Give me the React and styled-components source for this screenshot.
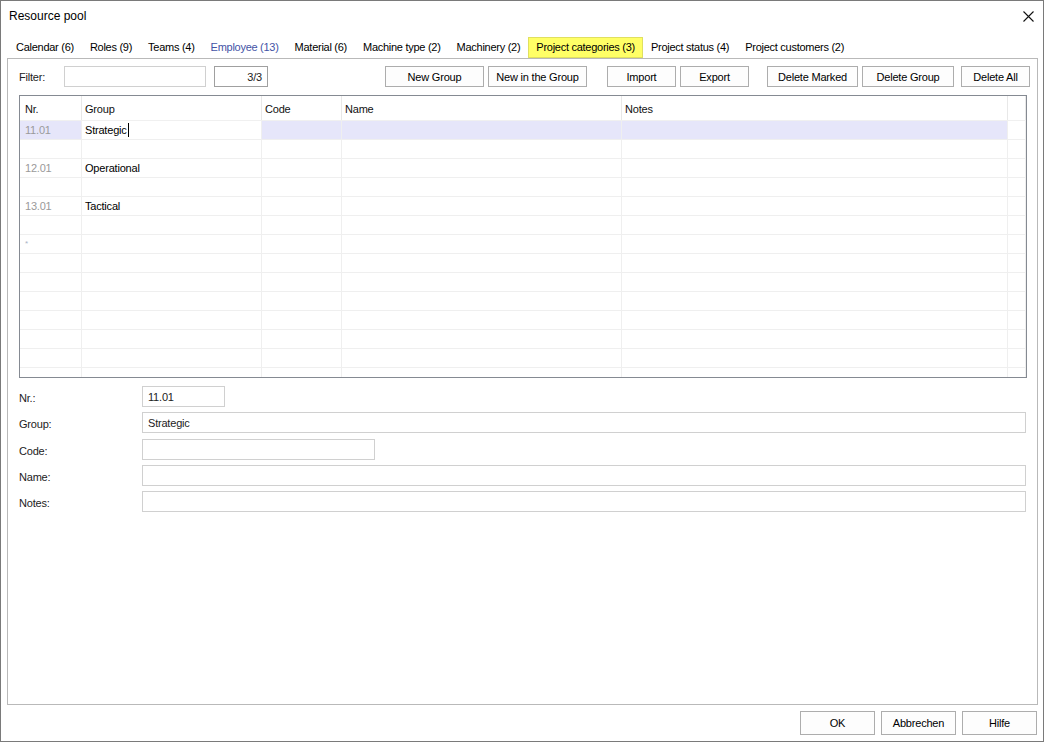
import React from "react";
import styled, { createGlobalStyle } from "styled-components";

const Global = createGlobalStyle`
  html, body { margin: 0; padding: 0; background: #fff; }
  body { font-family: "Liberation Sans", Arial, sans-serif; font-size: 11px; letter-spacing: -0.2px; color: #000; }
  * { box-sizing: border-box; }
`;

const Window = styled.div`
  width: 1044px;
  height: 742px;
  border: 1px solid #7a7a7a;
  background: #fff;
  display: flex;
  flex-direction: column;
`;

const TitleBar = styled.div`
  height: 36px;
  display: flex;
  align-items: flex-start;
  justify-content: space-between;
  padding: 7px 9px 0 8px;
`;

const Title = styled.div`
  font-size: 12px;
  letter-spacing: 0;
  line-height: 16px;
`;

const CloseIcon = styled.svg`
  width: 11px;
  height: 11px;
  margin-top: 3px;
`;

const TabStrip = styled.div`
  display: flex;
  height: 21px;
  padding-left: 7px;
  align-items: stretch;
`;

const Tab = styled.div`
  padding: 0 7px;
  line-height: 19px;
  letter-spacing: -0.27px;
  border: 1px solid ${p => (p.$active ? "#e0e060" : "transparent")};
  background: ${p => (p.$active ? "#ffff66" : "transparent")};
  color: ${p => (p.$hover ? "#4453a6" : "#000")};
  white-space: nowrap;
`;

const Panel = styled.div`
  margin-left: 6px;
  width: 1031px;
  height: 647px;
  border: 1px solid #b9b9b9;
  padding: 7px 7px 0 11px;
  display: flex;
  flex-direction: column;
`;

const Toolbar = styled.div`
  display: flex;
  align-items: center;
  height: 21px;
`;

const Label = styled.div`
  width: ${p => p.$w || 45}px;
  color: #222;
`;

const TextBox = styled.div`
  width: ${p => p.$w}px;
  height: ${p => p.$h || 21}px;
  margin-left: ${p => p.$ml || 0}px;
  border: 1px solid ${p => (p.$dark ? "#a0a0a0" : "#d0d0d0")};
  background: #fff;
  display: flex;
  align-items: center;
  justify-content: ${p => (p.$right ? "flex-end" : "flex-start")};
  padding: 0 5px;
  color: #222;
`;

const Button = styled.div`
  width: ${p => p.$w}px;
  height: ${p => p.$h || 21}px;
  margin-left: ${p => p.$ml || 0}px;
  border: 1px solid #adadad;
  background: #fdfdfd;
  display: flex;
  align-items: center;
  justify-content: center;
  white-space: nowrap;
`;

const ButtonGroup = styled.div`
  display: flex;
  margin-left: auto;
`;

const GridBox = styled.div`
  margin-top: 8px;
  width: 1008px;
  height: 283px;
  border: 1px solid #858a92;
  overflow: hidden;
  background: #fff;
`;

const COLS = "62px 180px 80px 280px 386px 18px";

const HeaderRow = styled.div`
  display: grid;
  grid-template-columns: ${COLS};
  height: 25px;
  border-bottom: 1px solid #f0f0f0;
`;

const HeadCell = styled.div`
  border-right: 1px solid #e8e8e8;
  padding-left: ${p => (p.$first ? 5 : 3)}px;
  padding-top: 1px;
  display: flex;
  align-items: center;
  color: #111;
`;

const Row = styled.div`
  display: grid;
  grid-template-columns: ${COLS};
  height: 19px;
  border-bottom: 1px solid #efefef;
`;

const Cell = styled.div`
  border-right: 1px solid #efefef;
  padding-left: ${p => (p.$first ? 5 : 3)}px;
  display: flex;
  align-items: center;
  background: ${p => (p.$sel ? "#e6e6fa" : "#fff")};
  color: ${p => (p.$muted ? "#9a9a9a" : "#000")};
  white-space: nowrap;
`;

const Star = styled.span`
  font-size: 8px;
  color: #a9b3c6;
  margin-top: -2px;
`;

const Caret = styled.span`
  display: inline-block;
  width: 1px;
  height: 14px;
  background: #000;
  margin-left: 1px;
`;

const Form = styled.div`
  margin-top: 8px;
  display: grid;
  grid-template-columns: 123px 884px;
  row-gap: 5.25px;
`;

const FormLabel = styled.div`
  padding-top: 5px;
  line-height: 15px;
  color: #222;
`;

const Footer = styled.div`
  display: flex;
  justify-content: flex-end;
  gap: 6px;
  margin-top: 6px;
  padding-right: 6px;
`;

const rows = [
  { nr: "11.01", group: "Strategic", sel: true },
  {},
  { nr: "12.01", group: "Operational" },
  {},
  { nr: "13.01", group: "Tactical" },
  {},
  { star: true },
  {}, {}, {}, {}, {}, {}, {},
];

const tabs = [
  "Calendar (6)",
  "Roles (9)",
  "Teams (4)",
  "Employee (13)",
  "Material (6)",
  "Machine type (2)",
  "Machinery (2)",
  "Project categories (3)",
  "Project status (4)",
  "Project customers (2)",
];

export default function App() {
  return (
    <>
      <Global />
      <Window>
        <TitleBar>
          <Title>Resource pool</Title>
          <CloseIcon viewBox="0 0 11 11">
            <path d="M0.5 0.5 L10.5 10.5 M10.5 0.5 L0.5 10.5" stroke="#111" strokeWidth="1.1" fill="none" />
          </CloseIcon>
        </TitleBar>
        <TabStrip>
          {tabs.map(t => (
            <Tab key={t} $active={t.startsWith("Project categories")} $hover={t.startsWith("Employee")}>
              {t}
            </Tab>
          ))}
        </TabStrip>
        <Panel>
          <Toolbar>
            <Label>Filter:</Label>
            <TextBox $w={142} />
            <TextBox $w={54} $ml={8} $dark $right>3/3</TextBox>
            <ButtonGroup>
              <Button $w={99}>New Group</Button>
              <Button $w={99} $ml={4}>New in the Group</Button>
              <Button $w={69} $ml={20}>Import</Button>
              <Button $w={69} $ml={4}>Export</Button>
              <Button $w={91} $ml={18}>Delete Marked</Button>
              <Button $w={92} $ml={4}>Delete Group</Button>
              <Button $w={69} $ml={7}>Delete All</Button>
            </ButtonGroup>
          </Toolbar>
          <GridBox>
            <HeaderRow>
              <HeadCell $first>Nr.</HeadCell>
              <HeadCell>Group</HeadCell>
              <HeadCell>Code</HeadCell>
              <HeadCell>Name</HeadCell>
              <HeadCell>Notes</HeadCell>
              <HeadCell />
            </HeaderRow>
            {rows.map((r, i) => (
              <Row key={i}>
                <Cell $first $sel={r.sel} $muted>
                  {r.star ? <Star>*</Star> : r.nr}
                </Cell>
                <Cell>
                  {r.group}
                  {r.sel && <Caret />}
                </Cell>
                <Cell $sel={r.sel} />
                <Cell $sel={r.sel} />
                <Cell $sel={r.sel} />
                <Cell />
              </Row>
            ))}
          </GridBox>
          <Form>
            <FormLabel>Nr.:</FormLabel>
            <TextBox $w={83}>11.01</TextBox>
            <FormLabel>Group:</FormLabel>
            <TextBox $w={884}>Strategic</TextBox>
            <FormLabel>Code:</FormLabel>
            <TextBox $w={233} />
            <FormLabel>Name:</FormLabel>
            <TextBox $w={884} />
            <FormLabel>Notes:</FormLabel>
            <TextBox $w={884} />
          </Form>
        </Panel>
        <Footer>
          <Button $w={75} $h={24}>OK</Button>
          <Button $w={75} $h={24}>Abbrechen</Button>
          <Button $w={75} $h={24}>Hilfe</Button>
        </Footer>
      </Window>
    </>
  );
}
